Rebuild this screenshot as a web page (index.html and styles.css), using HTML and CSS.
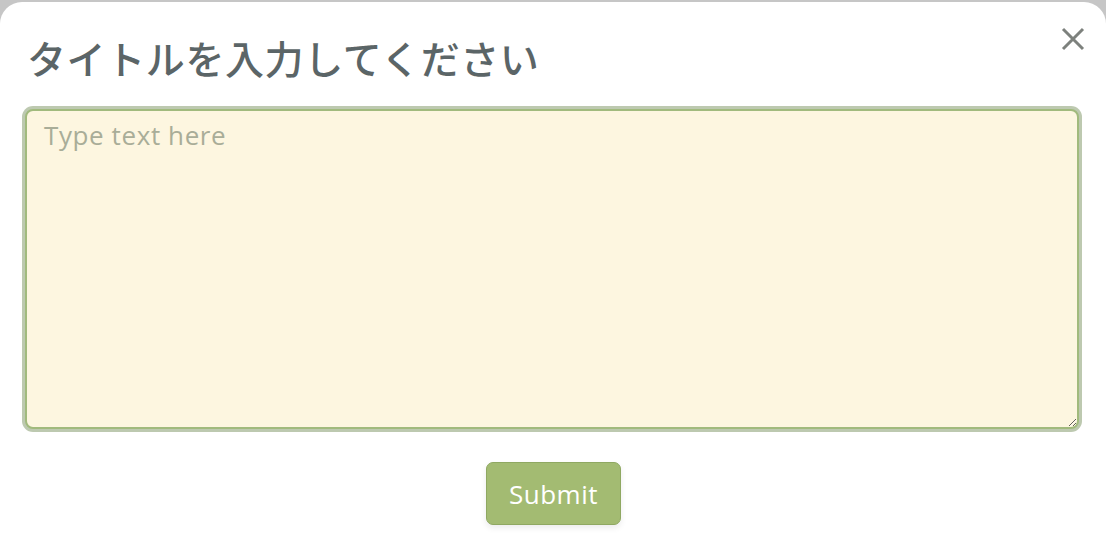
FILE: index.html
```html
<!DOCTYPE html>
<html lang="ja">
<head>
<meta charset="utf-8">
<title>Modal</title>
<link rel="stylesheet" href="styles.css">
</head>
<body>
<div class="modal">
  <button class="close" type="button" aria-label="Close">
    <svg width="24" height="24" viewBox="0 0 24 24"><path d="M2 2 L22 22 M22 2 L2 22" stroke="#7d817d" stroke-width="3" stroke-linecap="butt" fill="none"/></svg>
  </button>
  <h1 class="title">タイトルを入力してください</h1>
  <textarea class="field" placeholder="Type text here" autofocus></textarea>
  <div class="actions">
    <button class="submit" type="button">Submit</button>
  </div>
</div>
</body>
</html>
```
FILE: styles.css
```css
html, body {
  margin: 0;
  padding: 0;
  height: 100%;
}
body {
  background: #c6c6c6;
  font-family: "Noto Sans CJK JP", "Liberation Sans", sans-serif;
}
.modal {
  position: relative;
  margin-top: 2px;
  height: calc(100% - 2px);
  box-sizing: border-box;
  background: #ffffff;
  border-radius: 22px 22px 0 0;
  padding: 23px 24px 0 25px;
}
.close {
  position: absolute;
  top: 25px;
  right: 21px;
  width: 24px;
  height: 24px;
  padding: 0;
  border: 0;
  background: transparent;
  display: flex;
}
.title {
  margin: 0 0 0 2px;
  font-weight: 500;
  font-size: 39px;
  line-height: 64px;
  color: #5b6567;
  font-family: "Noto Sans CJK JP", sans-serif;
  letter-spacing: 0.6px;
}
.field {
  display: block;
  margin-top: 20px;
  width: 1054px;
  height: 320px;
  box-sizing: border-box;
  border: 2px solid #a1ba7d;
  border-radius: 8px;
  box-shadow: 0 0 0 3px #bdc9b0;
  background: #fdf6e0;
  outline: none;
  padding: 9px 17px;
  font-family: "Open Sans", sans-serif;
  font-size: 26px;
  line-height: 30px;
  letter-spacing: 0.6px;
  color: #333;
  resize: both;
  caret-color: #333;
}
.field::placeholder {
  color: #a9ad98;
}
.actions {
  display: flex;
  justify-content: center;
  margin-top: 33px;
}
.submit {
  width: 135px;
  height: 63px;
  box-sizing: border-box;
  background: #a3bb72;
  border: 1px solid #8fa862;
  border-radius: 7px;
  color: #ffffff;
  font-family: "Open Sans", sans-serif;
  font-size: 26px;
  letter-spacing: 0.5px;
  box-shadow: 0 3px 6px rgba(0,0,0,0.08);
  padding: 0;
}
```
